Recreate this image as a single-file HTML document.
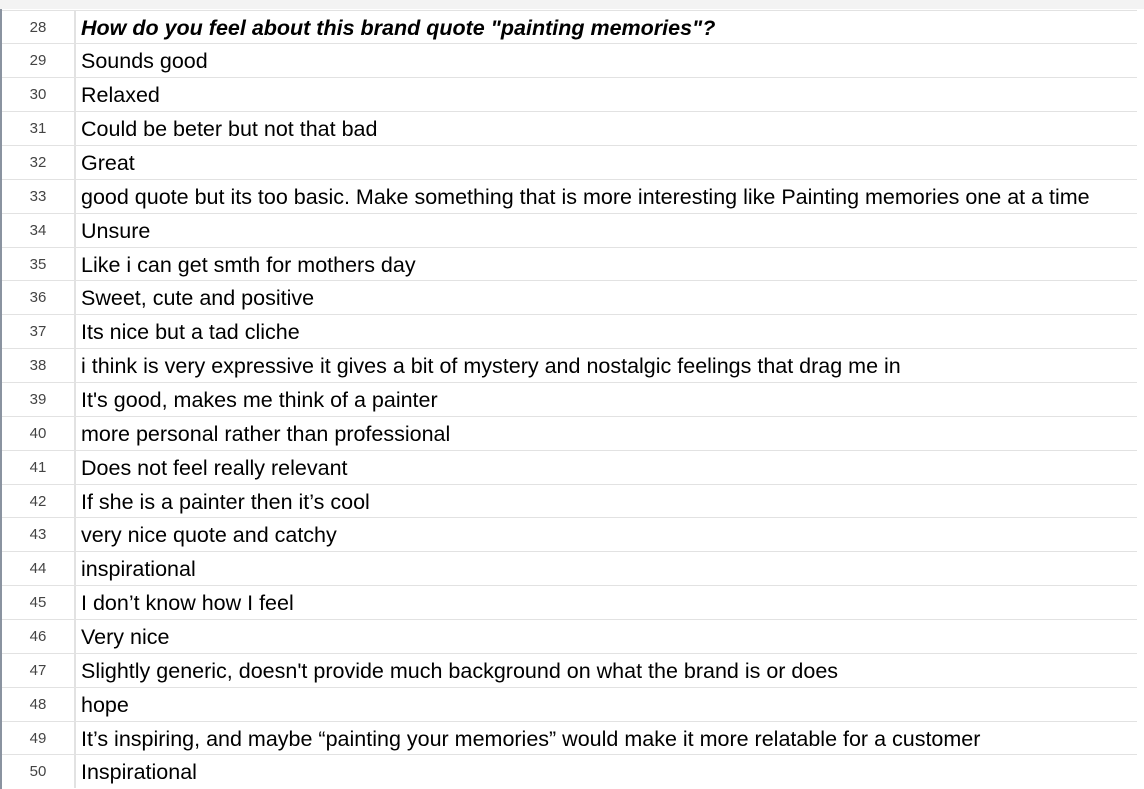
<!DOCTYPE html>
<html><head><style>
body{margin:0;width:1144px;height:780px;overflow:hidden;background:#fff;font-family:"Liberation Sans",Arial,sans-serif;position:relative}
.top{position:absolute;left:0;top:0;width:1144px;height:9px;background:#f3f3f3}
.ledge{position:absolute;left:0;top:9px;width:2px;height:780px;background:#8a93a0}
.r{position:absolute;left:2px;width:1135px;height:33.86px;border-top:1px solid #e2e2e2;box-sizing:border-box}
.n{position:absolute;left:0;width:72px;height:100%;border-right:2px solid #e2e2e2;text-align:center;font-size:15px;color:#444;line-height:34px}
.t{position:absolute;left:79px;font-size:21.5px;color:#000;line-height:34px;white-space:nowrap}
</style></head><body>
<div class="top"></div>
<div class="ledge"></div>
<div id="g"></div>
<script>
var rows=["<b><i>How do you feel about this brand quote \"painting memories\"?</i></b>","Sounds good","Relaxed","Could be beter but not that bad","Great","good quote but its too basic. Make something that is more interesting like Painting memories one at a time","Unsure","Like i can get smth for mothers day","Sweet, cute and positive","Its nice but a tad cliche","i think is very expressive it gives a bit of mystery and nostalgic feelings that drag me in","It's good, makes me think of a painter","more personal rather than professional","Does not feel really relevant","If she is a painter then it’s cool","very nice quote and catchy","inspirational","I don’t know how I feel","Very nice","Slightly generic, doesn't provide much background on what the brand is or does","hope","It’s inspiring, and maybe “painting your memories” would make it more relatable for a customer","Inspirational"];
var h="";
for(var i=0;i<rows.length;i++){h+='<div class="r" style="top:'+(9.5+i*33.86)+'px"><div class="n">'+(28+i)+'</div><div class="t">'+rows[i]+'</div></div>';}
document.getElementById("g").innerHTML=h;
</script>
</body></html>
